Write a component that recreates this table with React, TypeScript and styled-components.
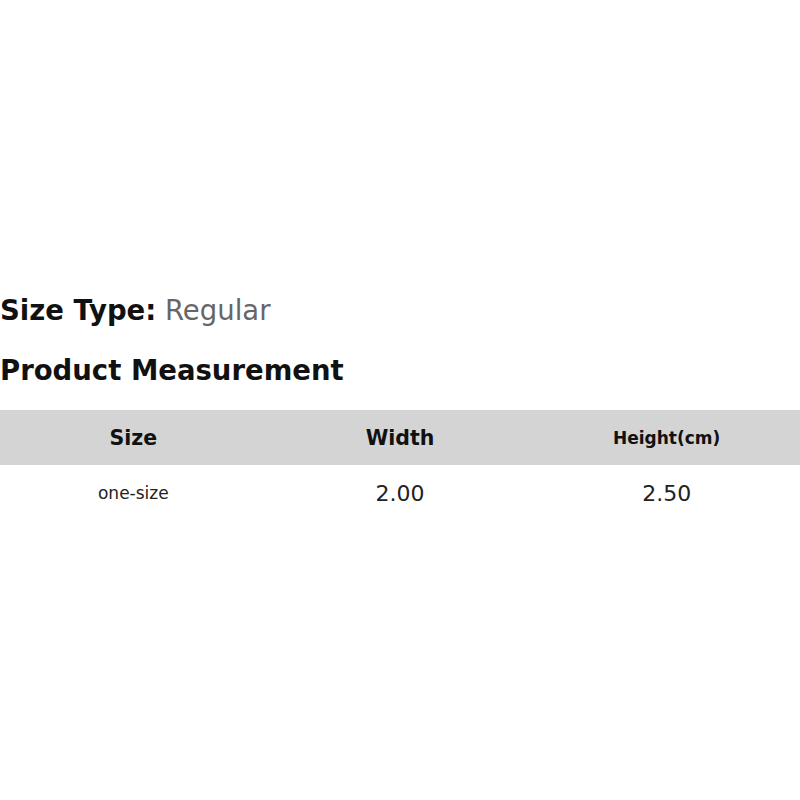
import React from "react";
import styled, { createGlobalStyle } from "styled-components";

const Global = createGlobalStyle`
  html, body { margin: 0; padding: 0; background: #fff; }
  body { font-family: "DejaVu Sans", sans-serif; color: #111; }
`;

const Page = styled.div`
  width: 800px;
  height: 800px;
  display: flex;
  flex-direction: column;
  padding-top: 292px;
  box-sizing: border-box;
`;

const SizeLine = styled.div`
  font-size: 27.5px;
  line-height: 36px;
  margin: 0;
`;

const Label = styled.span`
  font-weight: bold;
  color: #111;
`;

const Value = styled.span`
  color: #666;
`;

const Title = styled.h2`
  font-size: 27.5px;
  font-weight: bold;
  line-height: 36px;
  margin: 24px 0 0 0;
  color: #111;
`;

const Table = styled.div`
  margin-top: 22px;
  display: grid;
  grid-template-columns: repeat(3, 1fr);
`;

const HeadCell = styled.div<{ $small?: boolean }>`
  background: #d4d4d4;
  height: 55px;
  display: flex;
  align-items: center;
  justify-content: center;
  font-weight: bold;
  font-size: ${(p) => (p.$small ? "17px" : "20.5px")};
  color: #111;
`;

const Cell = styled.div<{ $small?: boolean }>`
  height: 56px;
  display: flex;
  align-items: center;
  justify-content: center;
  font-size: ${(p) => (p.$small ? "17px" : "22px")};
  color: #222;
`;

export default function App() {
  return (
    <>
      <Global />
      <Page>
        <SizeLine>
          <Label>Size Type:</Label> <Value>Regular</Value>
        </SizeLine>
        <Title>Product Measurement</Title>
        <Table>
          <HeadCell>Size</HeadCell>
          <HeadCell>Width</HeadCell>
          <HeadCell $small>Height(cm)</HeadCell>
          <Cell $small>one-size</Cell>
          <Cell>2.00</Cell>
          <Cell>2.50</Cell>
        </Table>
      </Page>
    </>
  );
}
